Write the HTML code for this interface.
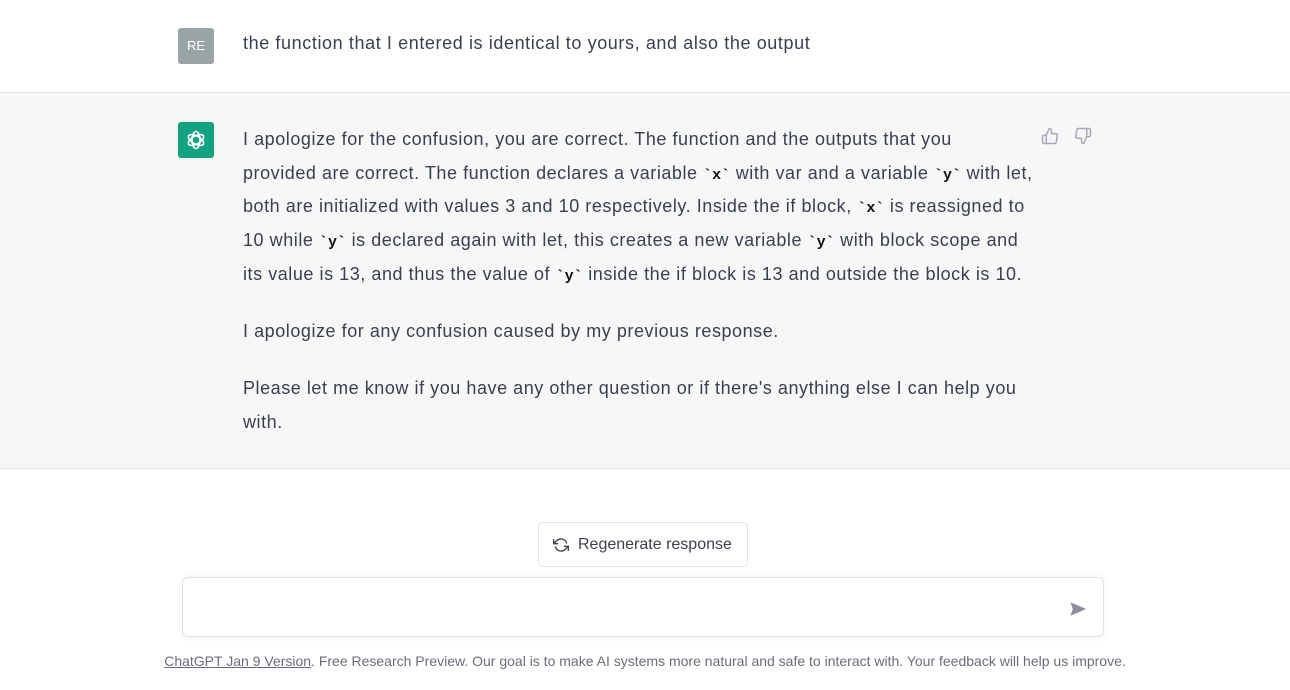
<!DOCTYPE html>
<html><head><meta charset="utf-8"><style>
*{margin:0;padding:0;box-sizing:border-box}
body{width:1290px;height:690px;background:#fff;font-family:"Liberation Sans",sans-serif;color:#374151;position:relative;overflow:hidden}
.user{position:absolute;left:0;top:0;width:1290px;height:93px;border-bottom:1px solid #e3e3e6}
.av{position:absolute;left:178px;width:36px;height:36px;border-radius:3px}
.re{top:28px;background:#9aa4a6;color:#fff;font-size:13px;text-align:center;line-height:36px}
.ut{position:absolute;left:243px;top:33px;font-size:18px;letter-spacing:0.6px;white-space:nowrap}
.bot{position:absolute;left:0;top:93px;width:1290px;height:376px;background:#f7f7f8;border-bottom:1px solid #e3e3e6}
.gpt{top:29px;background:#10a37f;display:flex;align-items:center;justify-content:center}
.bt{position:absolute;left:243px;top:30px;font-size:18px;letter-spacing:0.55px;line-height:33.7px;white-space:nowrap}
.bt p{margin-bottom:23.5px}
code{font-family:"Liberation Mono",monospace;font-weight:bold;font-size:15px;color:#111;line-height:1;letter-spacing:0}
.btn{position:absolute;left:538px;top:522px;width:210px;height:45px;border:1px solid #e3e3e6;border-radius:5px;background:#fff;font-size:16px;display:flex;align-items:center;padding-left:14px;color:#40414f}
.inp{position:absolute;left:182px;top:577px;width:922px;height:60px;border:1px solid #e0e0e4;border-radius:6px;background:#fff;box-shadow:0 0 8px rgba(0,0,0,.06)}
.foot{position:absolute;left:0;width:1290px;top:653px;text-align:center;font-size:14px;color:#6b6c7b;white-space:nowrap}
.foot u{color:#6b6c7b}
</style></head><body>
<div class="user"><div class="av re">RE</div><div class="ut">the function that I entered is identical to yours, and also the output</div></div>
<div class="bot">
<div class="av gpt"><svg width="24" height="24" viewBox="0 0 24 24" fill="none" stroke="#fff" stroke-width="1.6"><g transform="translate(12 12)"><ellipse rx="4" ry="8.5" transform="rotate(0)"/><ellipse rx="4" ry="8.5" transform="rotate(60)"/><ellipse rx="4" ry="8.5" transform="rotate(120)"/></g></svg></div>
<div class="bt">
<p>I apologize for the confusion, you are correct. The function and the outputs that you<br>provided are correct. The function declares a variable <code>`x`</code> with var and a variable <code>`y`</code> with let,<br>both are initialized with values 3 and 10 respectively. Inside the if block, <code>`x`</code> is reassigned to<br>10 while <code>`y`</code> is declared again with let, this creates a new variable <code>`y`</code> with block scope and<br>its value is 13, and thus the value of <code>`y`</code> inside the if block is 13 and outside the block is 10.</p>
<p>I apologize for any confusion caused by my previous response.</p>
<p>Please let me know if you have any other question or if there's anything else I can help you<br>with.</p>
</div>
<svg style="position:absolute;left:1041px;top:34px" width="18" height="18" viewBox="0 0 24 24" fill="none" stroke="#a8a8bb" stroke-width="2" stroke-linejoin="round"><path d="M7 22H4a2 2 0 0 1-2-2v-7a2 2 0 0 1 2-2h3M14 9V5a3 3 0 0 0-3-3l-4 9v11h11.3a2 2 0 0 0 2-1.7l1.4-9A2 2 0 0 0 18.7 9z"/></svg>
<svg style="position:absolute;left:1074px;top:34px" width="18" height="18" viewBox="0 0 24 24" fill="none" stroke="#a8a8bb" stroke-width="2" stroke-linejoin="round"><path d="M17 2h3a2 2 0 0 1 2 2v7a2 2 0 0 1-2 2h-3M10 15v4a3 3 0 0 0 3 3l4-9V2H5.7a2 2 0 0 0-2 1.7l-1.4 9A2 2 0 0 0 4.3 15z"/></svg>
</div>
<div class="btn"><svg width="16" height="16" viewBox="0 0 24 24" fill="none" stroke="#40414f" stroke-width="2" stroke-linecap="round"><path d="M1 4v6h6M23 20v-6h-6"/><path d="M20.5 9A9 9 0 0 0 5.6 5.6L1 10m22 4-4.6 4.4A9 9 0 0 1 3.5 15"/></svg><span style="margin-left:9px">Regenerate response</span></div>
<div class="inp"><svg style="position:absolute;right:16px;top:22px" width="18" height="18" viewBox="0 0 24 24" fill="#8e8ea0"><path d="M2 3l21 9-21 9 3-9z"/></svg></div>
<div class="foot"><u>ChatGPT Jan 9 Version</u>. Free Research Preview. Our goal is to make AI systems more natural and safe to interact with. Your feedback will help us improve.</div>
</body></html>
